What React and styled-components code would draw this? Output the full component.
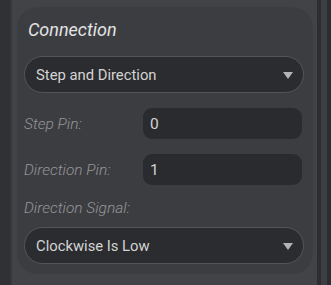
import React from "react";
import styled, { createGlobalStyle } from "styled-components";

const Global = createGlobalStyle`
  html, body { margin: 0; padding: 0; background: #2e2f33; }
  body { font-family: Roboto, "Liberation Sans", sans-serif; }
`;

const Root = styled.div`
  display: flex;
  width: 331px;
  height: 285px;
  overflow: hidden;
  background: #2e2f33;
`;

const LeftEdge = styled.div`
  width: 10px;
  background: #303135;
  border-right: 2px solid #36373b;
`;

const Panel = styled.div`
  flex: 1;
  background: #424347;
  padding: 8px 5px 13px 6px;
  display: flex;
  flex-direction: column;
`;

const Scroll = styled.div`
  display: flex;
`;

const Strip = styled.div`
  width: ${(p) => p.$w}px;
  background: ${(p) => p.$c};
`;

const Card = styled.div`
  flex: 1;
  background: #3c3d41;
  border-radius: 20px;
  padding: 12px 8px 9px 6px;
  display: flex;
  flex-direction: column;
  box-shadow: 0 0 2px rgba(0, 0, 0, 0.25);
`;

const Title = styled.div`
  font-style: italic;
  font-size: 18px;
  line-height: 20px;
  color: #e4e4e4;
  padding-left: 4px;
  margin-bottom: 16px;
`;

const Select = styled.div`
  position: relative;
  height: 35px;
  border: 1px solid #545559;
  border-radius: 19px;
  background: #2b2c30;
  display: flex;
  align-items: center;
  padding-left: 11px;
  font-size: 14.8px;
  color: #d4d4d4;
  margin-bottom: ${(p) => p.$mb || 0}px;
`;

const Arrow = styled.span`
  position: absolute;
  right: 10px;
  top: 50%;
  margin-top: -3px;
  width: 0;
  height: 0;
  border-left: 5.5px solid transparent;
  border-right: 5.5px solid transparent;
  border-top: 7px solid #b4b4b6;
`;

const Row = styled.div`
  display: flex;
  align-items: center;
  height: 31px;
  padding-right: 2px;
  margin-bottom: 15px;
`;

const Label = styled.div`
  width: 119px;
  font-style: italic;
  font-weight: 300;
  font-size: 15.5px;
  line-height: 16px;
  color: #969698;
  margin-bottom: ${(p) => p.$mb || 0}px;
`;

const Input = styled.div`
  flex: 1;
  height: 31px;
  border-radius: 9px;
  background: #2a2b2f;
  display: flex;
  align-items: center;
  padding-left: 7px;
  font-size: 15.5px;
  color: #d4d4d4;
`;

export default function App() {
  return (
    <>
      <Global />
      <Root>
        <LeftEdge />
        <Panel>
          <Card>
            <Title>Connection</Title>
            <Select $mb={15}>
              Step and Direction
              <Arrow />
            </Select>
            <Row>
              <Label>Step Pin:</Label>
              <Input>0</Input>
            </Row>
            <Row>
              <Label>Direction Pin:</Label>
              <Input>1</Input>
            </Row>
            <Label $mb={11}>Direction Signal:</Label>
            <Select>
              Clockwise Is Low
              <Arrow />
            </Select>
          </Card>
        </Panel>
        <Scroll>
          <Strip $w={4} $c="#2d2e32" />
          <Strip $w={6} $c="#3d3e42" />
          <Strip $w={4} $c="#2c2d31" />
        </Scroll>
      </Root>
    </>
  );
}
